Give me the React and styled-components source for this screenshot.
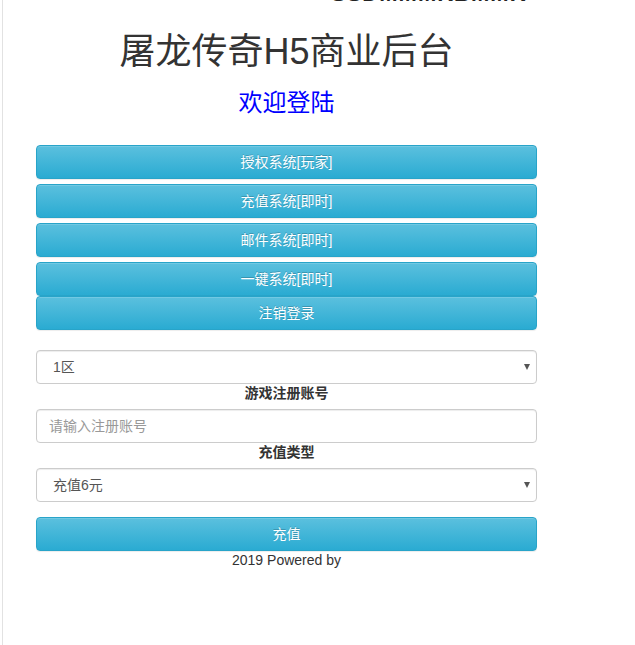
import styled, { createGlobalStyle } from "styled-components";

const GlobalStyle = createGlobalStyle`
  html, body {
    margin: 0;
    padding: 0;
    background: #fff;
  }
  body {
    font-family: "Liberation Sans", "Noto Sans CJK SC", sans-serif;
    font-size: 14px;
    line-height: 1.42857;
    color: #333;
  }
  * {
    box-sizing: border-box;
  }
`;

const Page = styled.div`
  margin-left: 2px;
  min-height: 100vh;
  border-left: 1px solid #e2e2e2;
`;

// heading scrolled mostly out of view at the top of the page
const TopCut = styled.div`
  height: 4px;
  overflow: hidden;
  display: flex;
  align-items: flex-end;
  padding-left: 328px;
`;

const TopCutText = styled.span`
  font-size: 22px;
  font-weight: bold;
  line-height: 22px;
  letter-spacing: 1px;
  color: #222;
  transform: translateY(1px);
`;

const Container = styled.div`
  width: 501px;
  margin-left: 33px;
  display: flex;
  flex-direction: column;
`;

const Title = styled.h1`
  margin: 28px 0 0;
  font-size: 36px;
  font-weight: normal;
  line-height: 1.1;
  text-align: center;
  color: #333;
`;

const Welcome = styled.h3`
  margin: 18px 0 29px;
  font-size: 24px;
  font-weight: normal;
  line-height: 1.1;
  text-align: center;
  color: #00f;
`;

const Button = styled.button`
  display: block;
  width: 100%;
  height: 34px;
  margin: ${(p) => p.$top ?? 0}px 0 ${(p) => p.$gap ?? 0}px;
  padding: 6px 12px;
  font-family: inherit;
  font-size: 14px;
  line-height: 20px;
  color: #fff;
  text-align: center;
  text-shadow: 0 -1px 0 rgba(0, 0, 0, 0.2);
  background-image: linear-gradient(to bottom, #5bc0de 0, #2aabd2 100%);
  border: 1px solid #28a4c9;
  border-radius: 4px;
  box-shadow: inset 0 1px 0 rgba(255, 255, 255, 0.15), 0 1px 1px rgba(0, 0, 0, 0.075);
  cursor: pointer;
`;

const Form = styled.form`
  display: flex;
  flex-direction: column;
  margin-top: 20px;
`;

const SelectWrap = styled.div`
  position: relative;
  &::after {
    content: "";
    position: absolute;
    right: 7px;
    top: 14px;
    border-left: 3.5px solid transparent;
    border-right: 3.5px solid transparent;
    border-top: 6px solid #555;
    pointer-events: none;
  }
`;

const Field = styled.div`
  display: block;
  width: 100%;
  height: 34px;
  padding: 6px 12px;
  font-size: 14px;
  line-height: 20px;
  border: 1px solid #ccc;
  border-radius: 4px;
  box-shadow: inset 0 1px 1px rgba(0, 0, 0, 0.075);
  background: #fff;
`;

const Select = styled(Field).attrs({ as: "select" })`
  appearance: none;
  padding-left: 16px;
  font-family: inherit;
  color: #555;
`;

const Input = styled(Field).attrs({ as: "input" })`
  font-family: inherit;
  color: #555;
  &::placeholder {
    color: #999;
  }
`;

const Label = styled.label`
  display: block;
  margin-bottom: 5px;
  font-weight: bold;
  text-align: center;
  color: #333;
`;

const Footer = styled.div`
  text-align: center;
  color: #333;
`;

const menu = [
  "授权系统[玩家]",
  "充值系统[即时]",
  "邮件系统[即时]",
  "一键系统[即时]",
];

export default function App() {
  return (
    <>
      <GlobalStyle />
      <Page>
        <TopCut>
          <TopCutText>SSDMMMKBMMK</TopCutText>
        </TopCut>
        <Container>
          <Title>屠龙传奇H5商业后台</Title>
          <Welcome>欢迎登陆</Welcome>
          {menu.map((m, i) => (
            <Button key={m} type="button" $gap={i < menu.length - 1 ? 5 : 0}>
              {m}
            </Button>
          ))}
          <Button type="button">注销登录</Button>
          <Form onSubmit={(e) => e.preventDefault()}>
            <SelectWrap>
              <Select defaultValue="1">
                <option value="1">1区</option>
                <option value="2">2区</option>
              </Select>
            </SelectWrap>
            <Label>游戏注册账号</Label>
            <Input placeholder="请输入注册账号" />
            <Label>充值类型</Label>
            <SelectWrap>
              <Select defaultValue="6">
                <option value="6">充值6元</option>
                <option value="30">充值30元</option>
              </Select>
            </SelectWrap>
            <Button type="submit" $top={15}>
              充值
            </Button>
          </Form>
          <Footer>2019 Powered by</Footer>
        </Container>
      </Page>
    </>
  );
}
